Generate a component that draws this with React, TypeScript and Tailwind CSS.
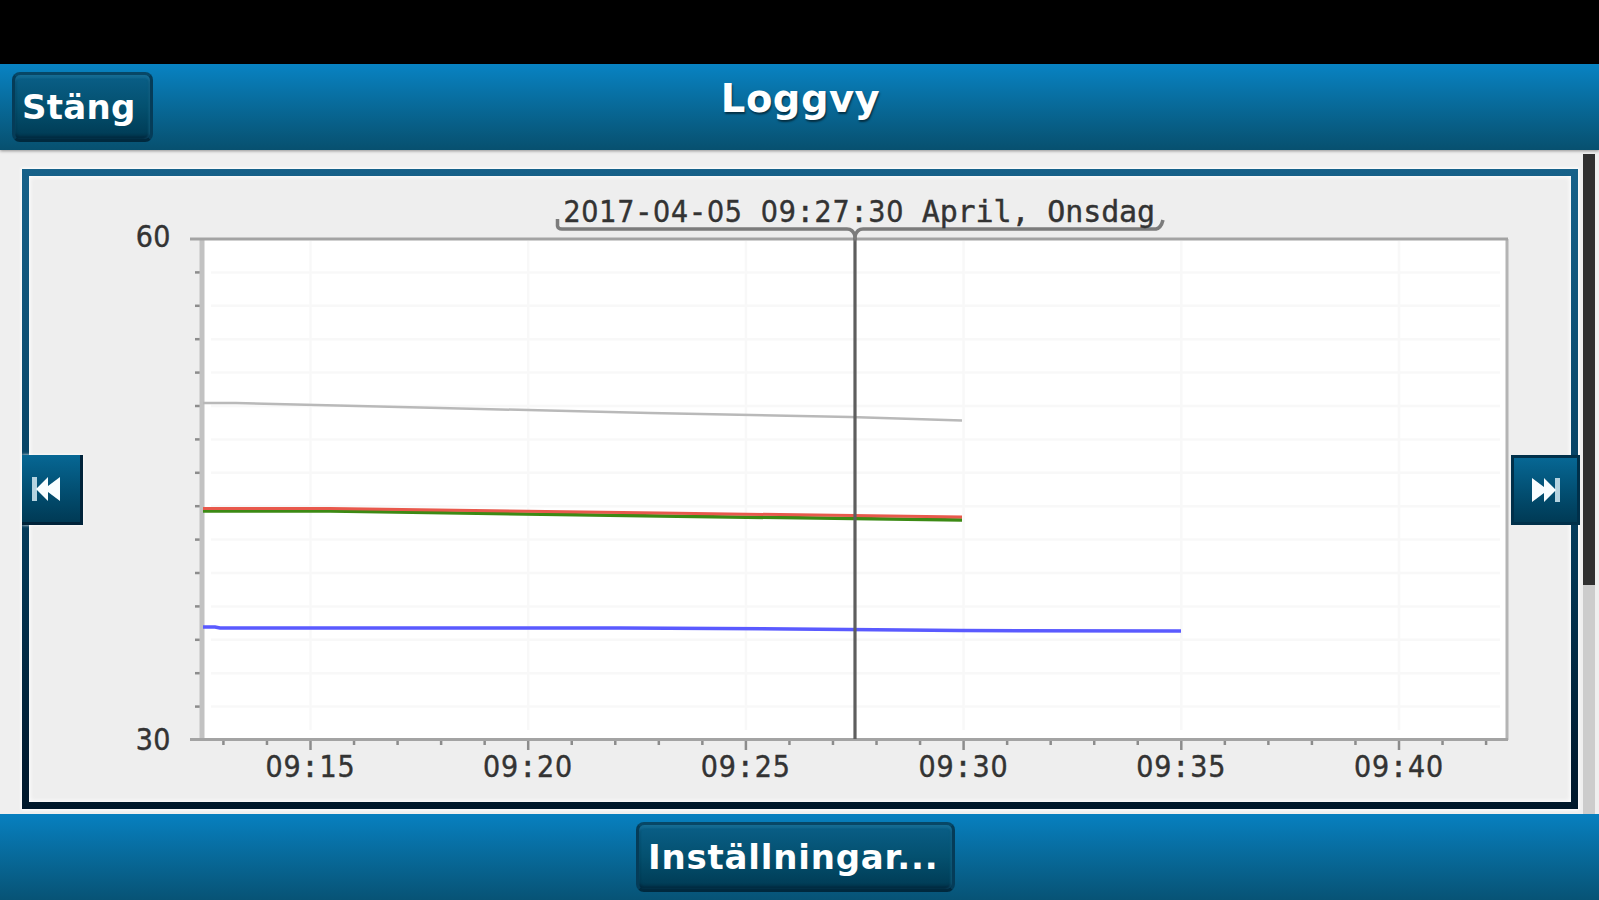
import type { ReactNode } from "react";

const X_LABELS = ["09:15", "09:20", "09:25", "09:30", "09:35", "09:40"];
const X_START = 310.5;
const X_STEP = 217.7;
const Y_TOP = 239;
const Y_STEP = 33.4;

// Digits use the plain zero, letters and punctuation stay monospaced
const CellText = ({ text, x, y, pitch }: { text: string; x: number; y: number; pitch: number }) => (
  <text y={y} textAnchor="middle" xmlSpace="preserve" stroke="#333" strokeWidth="0.4">
    {(text.match(/\d+|[^\d]+/g) ?? []).map((run, i, runs) => {
      const start = runs.slice(0, i).join("").length;
      const xs = [...run].map((_, k) => x + (start + k + 0.5) * pitch).join(" ");
      return (
        <tspan
          key={i}
          x={xs}
          className={
            /\d/.test(run)
              ? "font-['DejaVu_Sans_Condensed','DejaVu_Sans',sans-serif] [font-stretch:condensed]"
              : "font-['DejaVu_Sans_Mono',monospace]"
          }
        >
          {run}
        </tspan>
      );
    })}
  </text>
);

const Button = ({ className, children }: { className: string; children: ReactNode }) => (
  <button
    className={`rounded-lg border-3 border-[#053c58] border-t-[#074766] border-b-[#00293e] bg-linear-to-b from-[#0a5f88] via-[#04506f] to-[#003a53]
                text-left font-bold text-white whitespace-nowrap
                shadow-[inset_0_3px_2px_#2379a070,inset_-2px_0_2px_#2379a050,inset_0_-3px_3px_#00182a80] ${className}`}
  >
    {children}
  </button>
);

const Chart = () => (
  <svg viewBox="29 176 1542 626" className="block size-full text-[30px]" fill="#333">
    <rect x="202" y="239" width="1305" height="501" fill="#fff" />

    <g stroke="#f8f8f8" strokeWidth="2.5">
      {Array.from({ length: 14 }, (_, i) => {
        const y = Y_TOP + (i + 1) * Y_STEP;
        return <line key={i} x1="211" x2="1500" y1={y} y2={y} />;
      })}
      {X_LABELS.map((label, i) => {
        const x = X_START + i * X_STEP;
        return <line key={label} x1={x} x2={x} y1="241" y2="730" />;
      })}
    </g>

    <g strokeWidth="2.5" stroke="#8c8c8c">
      {Array.from({ length: 14 }, (_, i) => {
        const y = Y_TOP + (i + 1) * Y_STEP;
        return <line key={i} x1="195" x2="201" y1={y} y2={y} />;
      })}
      {Array.from({ length: 30 }, (_, i) => {
        const x = X_START + (i - 2) * (X_STEP / 5);
        const major = i % 5 === 2;
        return <line key={i} x1={x} x2={x} y1="740" y2={major ? 750 : 745} />;
      })}
    </g>

    <path d="M202 239V740" stroke="#c2c2c2" strokeWidth="5" />
    <path d="M1507 239V740" stroke="#b4b4b4" strokeWidth="3" />
    <path d="M190 239H1508M190 739.500H1508" stroke="#a3a3a3" strokeWidth="2.8" />

    <g fill="none" strokeWidth="3">
      <path d="M203 403H236L420 407.5L650 413L850 417L962 420.5" stroke="#b9b9b9" strokeWidth="2.5" />
      <path d="M203 511H330L660 516L962 520" stroke="#3c8a14" strokeWidth="3.5" />
      <path d="M203 508.5H330L660 513L962 517" stroke="#e8594c" />
      <path d="M203 627H215L220 628H620L790 629L960 630.5L1181 631" stroke="#5a5aff" strokeWidth="3.5" />
    </g>

    <path d="M855 236V739" stroke="#5e5e5e" strokeWidth="3.2" />
    <path
      d="M557.500 219V226Q558 229 562 229H847Q853 229 855 236Q857 229 863 229H1156Q1161 228 1163 220"
      fill="none"
      stroke="#7c7c7c"
      strokeWidth="3.5"
    />

    <CellText text="2017-04-05 09:27:30 April, Onsdag" x={563} y={221.500} pitch={17.94} />
    <CellText text="60" x={135.500} y={247} pitch={17.6} />
    <CellText text="30" x={135.500} y={749.500} pitch={17.6} />
    {X_LABELS.map((label, i) => (
      <CellText key={label} text={label} x={X_START + i * X_STEP - 45.500} y={777} pitch={18} />
    ))}
  </svg>
);

const SkipIcon = ({ className }: { className?: string }) => (
  <svg viewBox="0 0 28 24" className={`h-6 w-7 ${className ?? ""}`}>
    <path d="M23 0H28V24H23Z" fill="#b5d3e0" />
    <path d="M0 0L12 9V0L24 12L12 24V15L0 24Z" fill="#f8fdff" />
  </svg>
);

export default function App() {
  return (
    <div className="flex h-[900px] w-[1599px] flex-col overflow-hidden bg-black pt-16 font-['DejaVu_Sans',Verdana,sans-serif]">
      <header className="z-10 flex h-[86px] shrink-0 items-start bg-linear-to-b from-[#0883c3] to-[#07506f] pt-2 shadow-[0_1px_3px_#0006]">
        <div className="w-[400px] pl-3">
          <Button className="h-[70px] w-[141px] pl-[7px] text-[34px] leading-[64px] tracking-[0.3px]">Stäng</Button>
        </div>
        <h1 className="w-[801px] text-center text-[38.5px] leading-[54px] font-bold tracking-[0.5px] text-white [text-shadow:1px_2px_2px_#0008]">
          Loggvy
        </h1>
      </header>

      <main className="flex min-h-0 flex-1 justify-between bg-[#efefef] pr-1 pl-[22px]">
        <section className="relative mt-[19px] mb-[5px] w-[1556px] bg-linear-to-b from-[#17628a] via-[#064263] to-[#00172a] p-[7px] shadow-[0_0_3px_1px_#fff]">
          <div className="size-full bg-[#eee] shadow-[inset_0_0_4px_1px_#fff]">
            <Chart />
          </div>
          <button className="absolute top-[286px] left-0 flex h-[70px] w-[61px] items-center border-r-3 border-b-3 border-[#00233a] bg-linear-to-b from-[#076794] to-[#003a55] pl-2.5 shadow-[0_0_3px_#fff]">
            <SkipIcon className="-scale-x-100" />
          </button>
          <button className="absolute top-[286px] -right-0.5 flex h-[70px] w-[69px] items-center justify-center border-3 border-[#00304a] bg-linear-to-b from-[#076794] to-[#003a55]">
            <SkipIcon />
          </button>
        </section>
        <div className="mt-1 w-3 bg-[#ccc]">
          <div className="h-[431px] bg-[#303030]" />
        </div>
      </main>

      <footer className="flex h-[86px] shrink-0 items-start bg-linear-to-b from-[#0780c0] to-[#075375] pt-2 pl-[636px]">
        <Button className="h-[70px] w-[319px] pl-[9px] text-[34px] leading-[64px] tracking-[0.8px]">Inställningar...</Button>
      </footer>
    </div>
  );
}
